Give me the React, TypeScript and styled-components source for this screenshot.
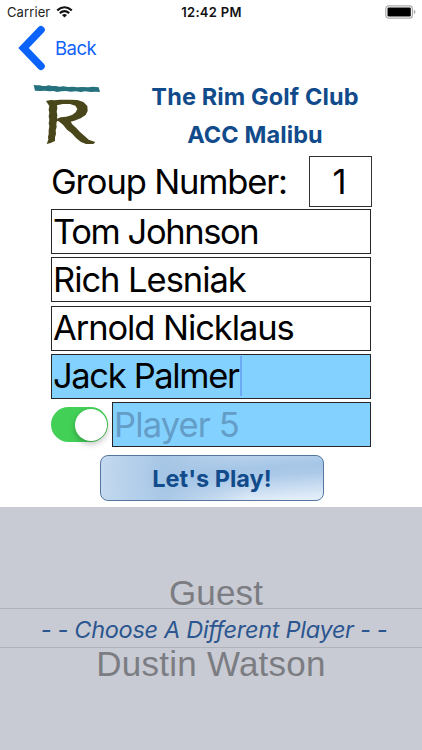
import React from 'react';
import styled, { createGlobalStyle } from 'styled-components';

const GlobalStyle = createGlobalStyle`
  * { box-sizing: border-box; }
  body { margin: 0; background: #fff; overflow: hidden; }
`;

const Screen = styled.main`
  width: 422px;
  height: 750px;
  display: flex;
  flex-direction: column;
  background: #fff;
  color: #000;
  font-family: Inter, "Liberation Sans", sans-serif;
  overflow: hidden;
`;

const StatusBar = styled.header`
  height: 24px;
  flex: none;
  display: grid;
  grid-template-columns: 1fr auto 1fr;
  align-items: center;
  padding: 0 6px 0 7px;
`;

const Carrier = styled.div`
  display: flex;
  align-items: center;
  gap: 6px;
  font-size: 13px;
  letter-spacing: 0.1px;
  color: #222;
`;

const Clock = styled.div`
  font-size: 13px;
  font-weight: 600;
  letter-spacing: 0.3px;
  color: #111;
`;

const BatterySlot = styled.div`
  display: flex;
  justify-content: flex-end;
`;

const BackButton = styled.button`
  height: 48px;
  flex: none;
  align-self: flex-start;
  display: flex;
  align-items: center;
  gap: 9px;
  margin: 0;
  padding: 0 0 0 18px;
  border: 0;
  background: none;
  color: #1062fb;
  font-family: inherit;
  font-size: 18.5px;
  letter-spacing: -0.5px;
`;

const ClubHeader = styled.section`
  height: 84px;
  flex: none;
  display: flex;
`;

const LogoSlot = styled.div`
  width: 104px;
  padding: 12px 0 0 32px;
`;

const ClubTitle = styled.h1`
  margin: 0;
  width: 302px;
  padding-top: 6px;
  text-align: center;
  color: #114b8b;
  font-size: 23.5px;
  font-weight: 700;
  line-height: 38px;
`;

const TitleLine = styled.span<{ $tracking: number }>`
  display: block;
  letter-spacing: ${(p) => p.$tracking}px;
`;

const Form = styled.section`
  flex: none;
  height: 351px;
  padding-left: 51px;
  display: flex;
  flex-direction: column;
`;

const GroupRow = styled.div`
  width: 321px;
  height: 51px;
  flex: none;
  display: flex;
  align-items: center;
  justify-content: space-between;
`;

const GroupLabel = styled.label`
  font-size: 34.5px;
  line-height: 50px;
  letter-spacing: -1.15px;
  white-space: nowrap;
`;

const GroupValue = styled.div`
  width: 63px;
  height: 51px;
  border: 1px solid #333;
  padding-right: 2px;
  text-align: center;
  font-size: 34.5px;
  line-height: 50px;
`;

const Players = styled.div`
  width: 320px;
  padding-top: 2px;
  display: flex;
  flex-direction: column;
  gap: 3.25px;
`;

const Field = styled.div<{ $active?: boolean; $tracking?: number; $muted?: boolean }>`
  height: 45px;
  flex: 1 1 auto;
  display: flex;
  align-items: center;
  padding-left: 1px;
  border: 1.5px solid #262626;
  background: ${(p) => (p.$active ? '#83d1ff' : '#fff')};
  color: ${(p) => (p.$muted ? '#649dc7' : '#000')};
  font-size: 34.5px;
  line-height: 42px;
  letter-spacing: ${(p) => p.$tracking ?? 0}px;
  white-space: nowrap;
`;

const Caret = styled.i`
  width: 2px;
  height: 40px;
  margin-left: 1px;
  background: #6ba9f4;
`;

const ToggleRow = styled.div`
  display: flex;
  align-items: center;
  gap: 4px;
`;

const Toggle = styled.div`
  width: 57px;
  height: 35px;
  flex: none;
  display: flex;
  justify-content: flex-end;
  align-items: center;
  padding-right: 1px;
  border-radius: 18px;
  background: #43d057;
`;

const Knob = styled.span`
  width: 32px;
  height: 32px;
  border-radius: 50%;
  background: #fff;
  box-shadow: 0 3px 6px rgba(0, 0, 0, 0.25);
`;

const PlayButton = styled.button`
  width: 224px;
  height: 46px;
  flex: none;
  margin: 8px 0 0 49px;
  padding: 0;
  border: 1.5px solid #54789f;
  border-radius: 8px;
  background:
    linear-gradient(90deg, #c3d9ef 0%, rgba(165, 197, 229, 0.9) 28%, rgba(165, 197, 229, 0) 66%),
    linear-gradient(176deg, #c6daef 0%, #a6c6e7 38%, #abc9e8 52%, #e4eef9 96%);
  color: #114b8b;
  font-family: inherit;
  font-size: 23.5px;
  font-weight: 700;
  letter-spacing: 0;
`;

const Picker = styled.section`
  flex: 1;
  display: flex;
  flex-direction: column;
  align-items: center;
  padding-top: 70px;
  background: #c9cbd4;
`;

const PickerOption = styled.div<{ $tracking: number; $shift: number }>`
  height: 31px;
  flex: none;
  font-family: "Liberation Sans", sans-serif;
  font-size: 35px;
  line-height: 31px;
  letter-spacing: ${(p) => p.$tracking}px;
  color: #7b7d82;
  white-space: nowrap;
  padding-left: ${(p) => p.$shift}px;
`;

const PickerSelection = styled.div`
  width: 100%;
  height: 40px;
  flex: none;
  padding: 1px 0 0 6px;
  border-top: 1px solid #b1b3ba;
  border-bottom: 1px solid #b1b3ba;
  text-align: center;
  color: #2b568f;
  font-size: 23.5px;
  letter-spacing: -0.3px;
  font-style: italic;
  font-variant-ligatures: none;
  line-height: 40px;
  white-space: pre;
`;

const WifiIcon = () => (
  <svg width="17" height="12" viewBox="0 0 17 12" fill="none" stroke="#111" strokeWidth="2.1">
    <path d="M1.2 4.4Q8.5-1.9 15.8 4.4" />
    <path d="M3.8 7.1Q8.5 3 13.2 7.1" />
    <path d="M6 9L8.5 11.6L11 9Q8.5 7 6 9Z" fill="#111" stroke="none" />
  </svg>
);

const BatteryIcon = () => (
  <svg width="31" height="14" viewBox="0 0 31 14">
    <rect x="0.8" y="0.8" width="26.6" height="12.4" rx="3" fill="#fff" stroke="#aaa" strokeWidth="1.2" />
    <rect x="2.5" y="2.5" width="23.3" height="9" rx="1.3" fill="#000" />
    <path d="M28.8 4.8Q30.5 5.4 30.5 7T28.8 9.2Z" fill="#aaa" />
  </svg>
);

const BackChevron = () => (
  <svg width="28" height="46" viewBox="0 0 28 46" fill="#0b63fb">
    <path d="M20.7 1.8Q22.8 0 24.8 1.6L26.4 3.1Q27.8 4.9 26.3 6.8L10.8 23L26.3 39.2Q27.8 41.1 26.4 42.9L24.8 44.4Q22.8 46 20.7 44.2L0.3 23Z" />
  </svg>
);

const ClubLogo = () => (
  <svg width="70" height="62" viewBox="36 27 210 186">
    <path d="M41 30L50 31L59 31L68 33L78 33L86 31L96 33L108 33L118 35L130 34L144 36L158 35L172 37L186 36L204 37L220 35L236 37L240 51L226 50L212 51L196 49L182 51L168 49L152 50L138 48L124 49L112 51L100 48L88 49L74 47L62 48L45 47Z" fill="#25717e" />
    <path
      fillRule="evenodd"
      d="M78 78L92 75L104 76L120 74L148 74L172 75L190 81L202 93L203 108L197 120L182 130L163 137L152 140L158 149L169 159L180 171L193 182L206 194L226 201L220 207L198 207L183 201L169 190L155 175L141 164L129 149L116 139L111 138L109 147L110 156L107 166L108 177L105 187L105 198L92 204L80 207L85 194L84 186L86 177L86 165L88 154L86 145L88 135L86 124L88 113L86 104L88 93L84 87ZM111 91L112 100L110 110L112 120L111 131L122 127L139 125L156 120L167 112L172 102L166 92L150 87L128 87Z"
      fill="#4a461b"
    />
  </svg>
);

export default function App() {
  return (
    <>
      <GlobalStyle />
      <Screen>
        <StatusBar>
          <Carrier>Carrier<WifiIcon /></Carrier>
          <Clock>12:42 PM</Clock>
          <BatterySlot><BatteryIcon /></BatterySlot>
        </StatusBar>
        <BackButton><BackChevron />Back</BackButton>
        <ClubHeader>
          <LogoSlot><ClubLogo /></LogoSlot>
          <ClubTitle>
            <TitleLine $tracking={0.12}>The Rim Golf Club</TitleLine>
            <TitleLine $tracking={0.1}>ACC Malibu</TitleLine>
          </ClubTitle>
        </ClubHeader>
        <Form>
          <GroupRow>
            <GroupLabel>Group Number:</GroupLabel>
            <GroupValue>1</GroupValue>
          </GroupRow>
          <Players>
            <Field $tracking={-1.4}>Tom Johnson</Field>
            <Field $tracking={-1.05}>Rich Lesniak</Field>
            <Field $tracking={-1.08}>Arnold Nicklaus</Field>
            <Field $active $tracking={-1.35}>Jack Palmer<Caret /></Field>
            <ToggleRow>
              <Toggle><Knob /></Toggle>
              <Field $active $muted $tracking={-0.85}>Player 5</Field>
            </ToggleRow>
          </Players>
          <PlayButton>Let's Play!</PlayButton>
        </Form>
        <Picker>
          <PickerOption $tracking={0.15} $shift={10}>Guest</PickerOption>
          <PickerSelection>- - Choose A Different Player - -</PickerSelection>
          <PickerOption $tracking={0.25} $shift={0}>Dustin Watson</PickerOption>
        </Picker>
      </Screen>
    </>
  );
}
